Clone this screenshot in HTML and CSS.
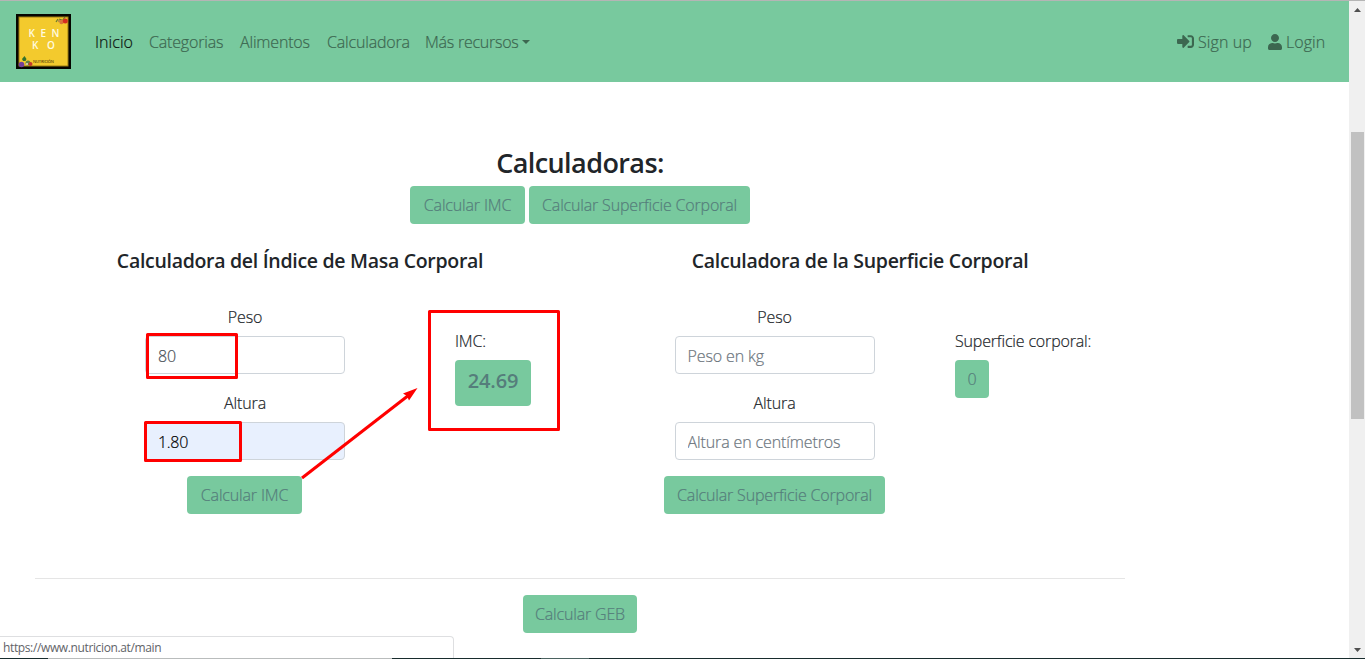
FILE: index.html
```html
<!DOCTYPE html>
<html lang="es">
<head>
<meta charset="utf-8">
<title>Kenko Nutrición</title>
<link rel="stylesheet" href="styles.css">
</head>
<body>
<div class="window">
  <div class="viewport">
    <nav class="navbar">
      <svg class="logo" width="55" height="55" viewBox="0 0 55 55">
        <rect width="55" height="55" fill="#050500"/>
        <rect x="2.5" y="2.5" width="50" height="50" fill="#9b7d12"/>
        <rect x="3.5" y="3.5" width="48" height="48" fill="#f3ca2d"/>
        <g class="logo-name"><text x="12.500 24.500 35.500" y="22.500">KEN</text><text x="16 31" y="35">KO</text></g>
        <text class="logo-tag" x="17" y="49" textLength="21">NUTRICIÓN</text>
        <path d="M40 8l2-3M43 5l3 1M46 7l3-4" stroke="#66772e" stroke-width="1.2"/>
        <circle cx="45.500" cy="8" r="2.200" fill="#d8753a"/><circle cx="49.300" cy="7" r="2.500" fill="#d42d22"/><circle cx="43" cy="7" r="1.200" fill="#bd8c45"/>
        <path d="M8.500 42l2 3-1 2H7l-1-2z" fill="#35732d"/>
        <circle cx="5.500" cy="50.500" r="2.800" fill="#754099"/><circle cx="12" cy="49" r="2.500" fill="#638340"/><circle cx="14.500" cy="50" r="2" fill="#c63a2c"/><circle cx="11" cy="50" r="1" fill="#f5d8c6"/>
      </svg>
      <div class="links">
        <a class="active w-inicio">Inicio</a><a class="w-cat">Categorias</a><a class="w-alim">Alimentos</a><a class="w-calc">Calculadora</a><a class="w-more">Más recursos<i class="caret"></i></a>
      </div>
      <div class="account">
        <a><svg width="17" height="17" viewBox="0 0 512 512"><path d="M416 448h-84c-6.600 0-12-5.400-12-12v-40c0-6.600 5.400-12 12-12h84c17.700 0 32-14.300 32-32V160c0-17.700-14.300-32-32-32h-84c-6.600 0-12-5.400-12-12V76c0-6.600 5.400-12 12-12h84c53 0 96 43 96 96v192c0 53-43 96-96 96zm-47-209L201 71c-15-15-41-4.500-41 17v96H24c-13.300 0-24 10.700-24 24v96c0 13.300 10.700 24 24 24h136v96c0 21.500 26 32 41 17l168-168c9.300-9.400 9.300-24.600 0-34z"/></svg><span class="sign">Sign up</span></a>
        <a><svg width="14" height="16" viewBox="0 0 448 512"><path d="M224 256c70.700 0 128-57.300 128-128S294.700 0 224 0 96 57.300 96 128s57.300 128 128 128zm89.600 32h-16.700c-22.200 10.200-46.900 16-72.900 16s-50.600-5.800-72.900-16h-16.700C60.200 288 0 348.200 0 422.400V464c0 26.500 21.500 48 48 48h352c26.500 0 48-21.500 48-48v-41.600c0-74.200-60.200-134.400-134.400-134.400z"/></svg><span class="login">Login</span></a>
      </div>
    </nav>
    <main class="content">
      <h1>Calculadoras:</h1>
      <div class="actions"><button class="btn imc">Calcular IMC</button><button class="btn surface">Calcular Superficie Corporal</button></div>
      <div class="calculators">
        <section>
          <h2>Calculadora del Índice de Masa Corporal</h2>
          <div class="calculator bmi">
            <form>
              <label>Peso</label><input value="80">
              <label>Altura</label><input class="filled" value="1.80">
              <button class="btn imc" type="button">Calcular IMC</button>
            </form>
            <div class="result"><p>IMC:</p><div class="btn value">24.69</div></div>
          </div>
        </section>
        <section>
          <h2>Calculadora de la Superficie Corporal</h2>
          <div class="calculator area">
            <form>
              <label>Peso</label><input placeholder="Peso en kg">
              <label>Altura</label><input placeholder="Altura en centímetros">
              <button class="btn surface" type="button">Calcular Superficie Corporal</button>
            </form>
            <div class="result"><p>Superficie corporal:</p><div class="btn zero">0</div></div>
          </div>
        </section>
      </div>
      <hr>
      <button class="btn geb">Calcular GEB</button>
    </main>
  </div>
  <aside class="scrollbar"><svg width="7" height="4"><path d="M0 4h7L3.500 0z"/></svg><div class="thumb"></div><svg class="down" width="7" height="4"><path d="M0 0h7L3.500 4z"/></svg></aside>
  <div class="status">https://www.nutricion.at/main</div>
  <div class="bottom-edge"></div>
  <svg class="annotations" width="1365" height="659">
    <g fill="none" stroke="#f00" stroke-width="3" stroke-linejoin="round"><rect x="147.500" y="334.500" width="89" height="43"/><rect x="145.500" y="422.500" width="95" height="38"/><rect x="429.500" y="311.500" width="129" height="118"/><path d="M302 478L409 395"/></g>
    <path d="M417.500 388L403 393.500L407 396L409 400.500Z" fill="#f00"/>
  </svg>
</div>
</body>
</html>
```
FILE: styles.css
```css
* { box-sizing: border-box; }
body { margin: 0; overflow: hidden; background: #fff; color: #212529; font: 300 16px/24px "Open Sans", "Noto Sans", sans-serif; -webkit-text-stroke: .2px; }
.window { position: relative; display: flex; width: 1365px; height: 659px; border-top: 1px solid #b5b5b5; }
.viewport { width: 1349px; }
.navbar { display: flex; align-items: center; height: 81px; padding: 0 24px 0 16px; background: #78c99e; color: #3c6750; }
.logo { display: block; -webkit-text-stroke: 0; }
.logo-name { font: 600 10px/10px "Open Sans", sans-serif; fill: #fffbe0; }
.logo-tag { font: 600 4px "Open Sans", sans-serif; fill: #5e4a0c; }
.links { display: flex; gap: 16px; margin-left: 24px; }
.links a { padding-top: 1px; white-space: nowrap; letter-spacing: -.17px; }
.links .active { color: #0c1410; letter-spacing: .05px; }
.w-inicio { width: 38px; }
.w-cat { width: 75px; }
.w-alim { width: 71px; }
.w-calc { width: 83px; }
.links .w-more { margin-left: -1px; letter-spacing: -.25px; }
.caret { display: inline-block; margin-left: 4px; border: 4.8px solid transparent; border-top-color: currentColor; border-bottom: 0; vertical-align: 4px; }
.account { display: flex; gap: 16px; margin-left: auto; }
.account a { display: flex; align-items: center; gap: 4px; }
.account span { padding-top: 1px; white-space: nowrap; }
.sign { width: 54px; letter-spacing: .1px; }
.login { width: 39px; letter-spacing: .05px; }
.account svg { fill: #3c6750; }
.content { display: flex; flex-direction: column; width: 1120px; margin-left: 20px; padding-top: 64px; }
h1, h2, p { margin: 0; }
h1, h2, .value { -webkit-text-stroke: 0; }
h1 { height: 40px; font-size: 27px; line-height: 34px; font-weight: 600; text-align: center; letter-spacing: -.58px; }
.actions { display: flex; justify-content: center; gap: 4px; }
.btn { display: block; height: 38px; padding: 1px 0 0; border: 0; border-radius: 4px; background: #78c99e; color: #557d7b; font: inherit; line-height: 37px; text-align: center; letter-spacing: -.17px; white-space: nowrap; }
.btn.imc { width: 115px; }
.btn.surface { width: 221px; }
.btn.geb { width: 114px; align-self: center; }
.calculators { display: grid; grid-template-columns: 560px 560px; margin-top: 25px; }
h2 { font-size: 19.5px; line-height: 24px; font-weight: 600; text-align: center; letter-spacing: -.3px; white-space: nowrap; }
.calculator { display: flex; margin-top: 31px; }
.bmi { padding-left: 125px; gap: 110px; }
.area { padding-left: 84px; gap: 70px; }
form { display: flex; flex-direction: column; align-items: center; }
.bmi form { width: 200px; }
.bmi form .btn { margin-right: 1px; }
.area form { width: 221px; }
label { height: 24px; padding-top: 1px; margin-bottom: 8px; letter-spacing: -.1px; }
input { width: 200px; height: 38px; margin: 0 0 16px; padding: 1px 12px 0; border: 1px solid #ced4da; border-radius: 4px; font: inherit; color: #495057; letter-spacing: -.12px; -webkit-text-stroke: .2px; }
input::placeholder { color: #6c757d; opacity: 1; }
.filled { background: #e8f0fe; color: #000; letter-spacing: -.3px; }
.result { padding-top: 24px; }
.result p { height: 24px; padding-top: 1px; margin-bottom: 8px; white-space: nowrap; letter-spacing: -.17px; }
.value { width: 76px; height: 46px; font-size: 20px; font-weight: 600; line-height: 39px; }
.zero { width: 34px; }
hr { width: 1090px; height: 1px; margin: 64px auto 16px; border: 0; background: #e5e5e5; }
.scrollbar { display: flex; flex-direction: column; align-items: center; width: 16px; padding: 7px 0; background: #f0f0f0; }
.scrollbar svg { fill: #505050; }
.thumb { width: 13px; height: 287px; margin-top: 120px; background: #c1c1c1; }
.down { margin-top: auto; }
.status { position: absolute; left: 0; bottom: 0; width: 454px; height: 23px; padding-left: 3px; border: 1px solid #dedfe1; border-left: 0; border-bottom: 0; border-radius: 0 4px 0 0; background: #fff; color: #5f6368; font: 12px/22px "Open Sans", sans-serif; letter-spacing: -.37px; -webkit-text-stroke: 0; }
.bottom-edge { position: absolute; left: 0; bottom: 0; width: 1365px; height: 1px; background: linear-gradient(90deg, #182c2d 48px, #b9bcbc 48px 392px, #182c2d 392px 541px, #4b6260 541px 589px, #182c2d 589px); }
.annotations { position: absolute; left: 0; top: -1px; pointer-events: none; }
```
